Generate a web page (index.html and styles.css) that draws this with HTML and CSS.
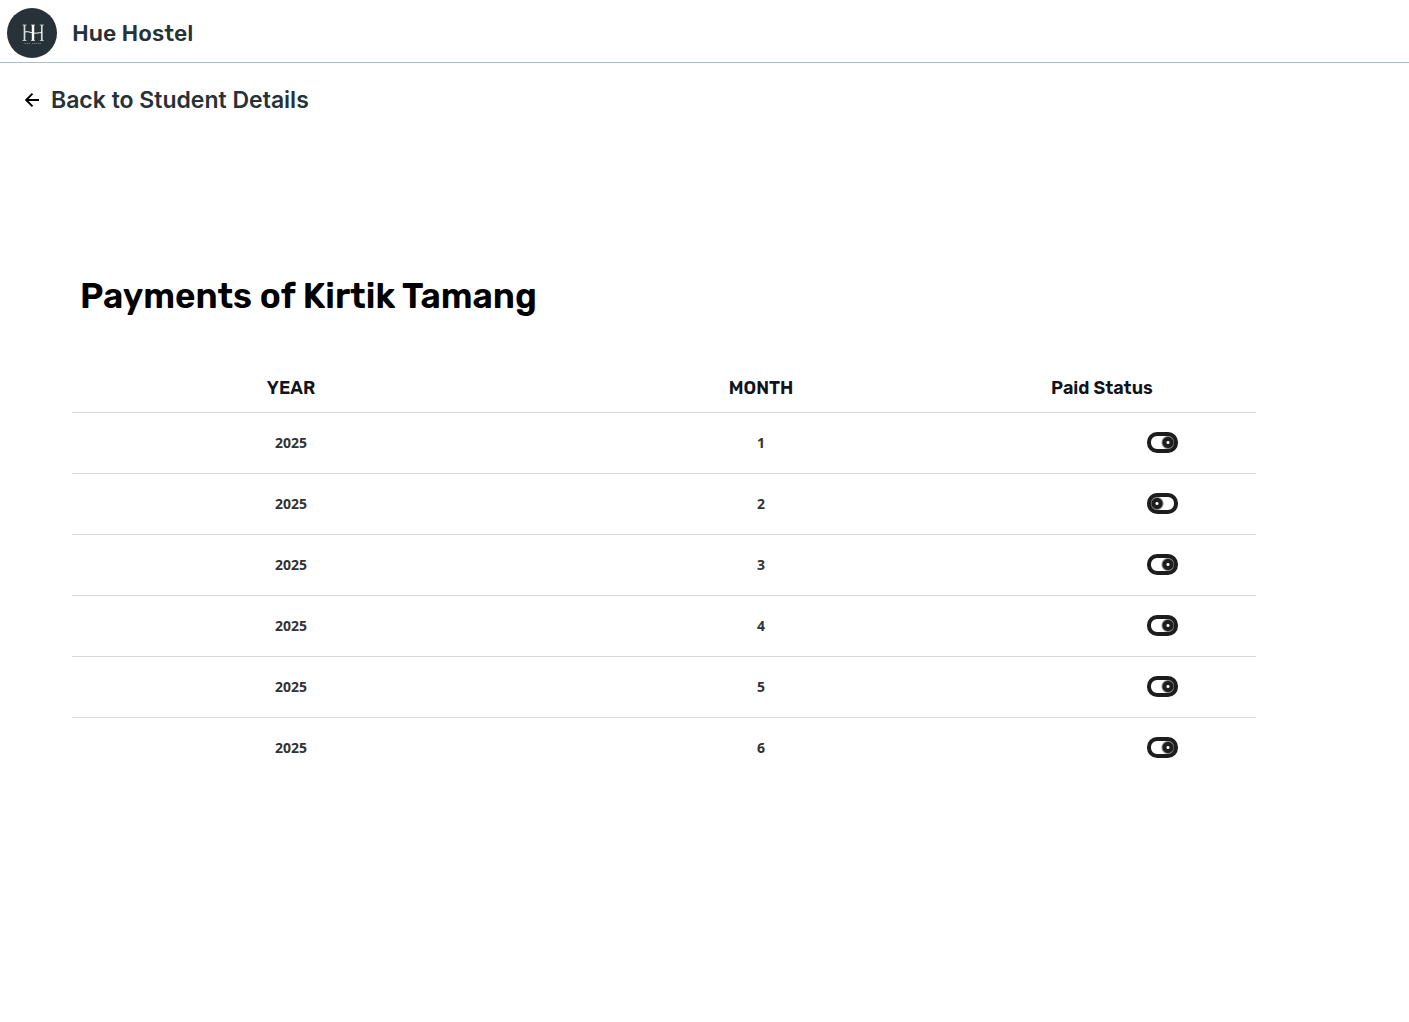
FILE: index.html
```html
<!DOCTYPE html>
<html lang="en">
<head>
<meta charset="utf-8">
<meta name="viewport" content="width=device-width, initial-scale=1">
<title>Hue Hostel</title>
<link rel="stylesheet" href="styles.css">
</head>
<body>
<header class="topbar">
  <svg class="logo" viewBox="0 0 50 50" aria-hidden="true">
    <circle cx="25" cy="25" r="25" fill="#263238"/>
    <path d="M15.500 17h4M15.500 32.500h4M32.800 17h4M32.800 32.500h4M24 17h4M24 32.500h4" stroke="#d5d9dc" stroke-width=".8"/>
    <path d="M17.500 17v15.500M34.800 17v15.500" stroke="#d5dadc" stroke-width="1.700"/>
    <path d="M26 17v15.500" stroke="#fff" stroke-width="2.400"/>
    <path d="M18 24c3-1 5 .5 8 1s5-.2 9-.5" fill="none" stroke="#fff"/>
    <path d="M17.500 35.500h6M25 35.500h9" stroke="#77838a" stroke-width=".8" stroke-dasharray="1.500 .5"/>
  </svg>
  <span class="brand">Hue Hostel</span>
</header>
<main>
  <a class="back" href="#">
    <svg class="arrow" viewBox="0 0 14 14" aria-hidden="true"><path d="M14 7H1M7.500.7 1.200 7l6.300 6.300" fill="none" stroke="#000" stroke-width="1.900"/></svg>
    <span>Back to Student Details</span>
  </a>
  <section class="payments">
    <h1 class="title">Payments of Kirtik Tamang</h1>
    <table class="table">
      <colgroup><col class="col-year"><col class="col-month"><col></colgroup>
      <thead><tr><th scope="col">YEAR</th><th scope="col">MONTH</th><th scope="col" class="status-head">Paid Status</th></tr></thead>
      <tbody>
        <tr><td>2025</td><td>1</td><td class="status"><input class="toggle" type="checkbox" aria-label="Month 1 paid" checked></td></tr>
        <tr><td>2025</td><td>2</td><td class="status"><input class="toggle" type="checkbox" aria-label="Month 2 paid"></td></tr>
        <tr><td>2025</td><td>3</td><td class="status"><input class="toggle" type="checkbox" aria-label="Month 3 paid" checked></td></tr>
        <tr><td>2025</td><td>4</td><td class="status"><input class="toggle" type="checkbox" aria-label="Month 4 paid" checked></td></tr>
        <tr><td>2025</td><td>5</td><td class="status"><input class="toggle" type="checkbox" aria-label="Month 5 paid" checked></td></tr>
        <tr><td>2025</td><td>6</td><td class="status"><input class="toggle" type="checkbox" aria-label="Month 6 paid" checked></td></tr>
      </tbody>
    </table>
  </section>
</main>
</body>
</html>
```
FILE: styles.css
```css
* { box-sizing: border-box; }
body {
  margin: 0;
  background: #fff;
  color: #263238;
  font-family: Rubik, Inter, "Liberation Sans", sans-serif;
}
.topbar {
  display: flex;
  align-items: center;
  gap: 15px;
  padding: 8px 7px 4px;
  border-bottom: 1px solid #a9c3c4;
}
.logo { width: 50px; height: 50px; }
.brand { font: 500 23px/32px Rubik, Roboto, sans-serif; }
.back {
  display: inline-flex;
  align-items: center;
  gap: 12px;
  margin: 21px 0 0 25px;
  color: #263238;
  font: 600 23px/32px Inter, sans-serif;
  text-decoration: none;
}
.arrow { width: 14px; height: 14px; }
.payments { padding: 156px 153px 0 72px; }
.title {
  margin: 0;
  padding-left: 8px;
  color: #000;
  font: 600 35px/48px Rubik, Roboto, sans-serif;
}
.table {
  width: 100%;
  margin-top: 44px;
  border-collapse: collapse;
  table-layout: fixed;
}
.col-year { width: 37%; }
.col-month { width: 42.400%; }
th {
  height: 48px;
  padding: 0;
  color: #11141a;
  font: 600 18px/24px Rubik, Roboto, sans-serif;
}
td {
  height: 61px;
  padding: 0;
  border-top: 1px solid #d8d8d8;
  color: #333;
  text-align: center;
  font: 700 14px/20px "Noto Sans", sans-serif;
}
.status-head { padding-left: 39px; text-align: left; }
.status { padding-left: 135px; text-align: left; }
.toggle {
  display: block;
  appearance: none;
  width: 31px;
  height: 21px;
  margin: 0;
  border: 4px solid #1d1d1d;
  border-radius: 10px;
  background: radial-gradient(circle at 17px 50%, #fff 1px, #1d1d1d 2px, #1d1d1d 5px, #fff 7px);
}
.toggle:not(:checked) {
  background: radial-gradient(circle at 6px 50%, #fff 1px, #1d1d1d 2px, #1d1d1d 5px, #fff 7px);
}
```
